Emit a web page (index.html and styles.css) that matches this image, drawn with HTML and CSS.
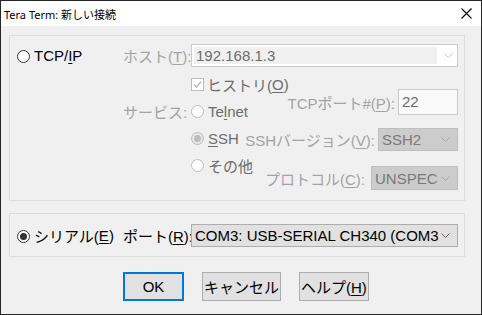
FILE: index.html
```html
<!DOCTYPE html>
<html lang="ja">
<head>
    <meta charset="UTF-8">
    <title>Tera Term: 新しい接続</title>
    <link rel="stylesheet" href="styles.css">
</head>
<body>

<div class="window">
    <div class="titlebar">
        <span class="title">Tera Term: 新しい接続</span>
        <svg class="close" width="11" height="11" viewBox="0 0 11 11">
            <path d="M0.5 0.5 L10.5 10.5 M10.5 0.5 L0.5 10.5" stroke="#000" stroke-width="1.1" fill="none"/>
        </svg>
    </div>

    <div class="content">
        <!-- TCP/IP -->
        <div class="group tcp">
            <div class="host-row">
                <label class="radio-item main"><span class="radio"></span>TCP/<u>I</u>P</label>
                <span class="label dim">ホスト(<u>T</u>):</span>
                <div class="combo host-combo">
                    <span class="edit">192.168.1.3</span>
                    <svg class="chev" width="9" height="5" viewBox="0 0 9 5"><polyline points="0.5,0.5 4.5,4.5 8.5,0.5" fill="none" stroke="#c2c2c2"/></svg>
                </div>
            </div>

            <div class="tcp-lower">
                <div class="svc-grid">
                    <span></span>
                    <label class="check-item off">
                        <span class="check">
                            <svg width="11" height="11" viewBox="0 0 11 11"><polyline points="2,5.5 4.5,8 9,2.5" fill="none" stroke="#b5b5b5" stroke-width="1.3"/></svg>
                        </span>ヒストリ(<u>O</u>)
                    </label>
                    <span class="label dim">サービス:</span>
                    <label class="radio-item off"><span class="radio"></span>Te<u>l</u>net</label>
                    <span></span>
                    <label class="radio-item off"><span class="radio checked"></span><u>S</u>SH</label>
                    <span></span>
                    <label class="radio-item off"><span class="radio"></span>その他</label>
                </div>

                <div class="opts">
                    <div class="opt port-opt">
                        <span class="label dim">TCPポート#(<u>P</u>):</span>
                        <span class="edit-box">22</span>
                    </div>
                    <div class="opt ver-opt">
                        <span class="label dim">SSHバージョン(<u>V</u>):</span>
                        <div class="combo gray ver-combo">
                            <span>SSH2</span>
                            <svg class="chev" width="9" height="5" viewBox="0 0 9 5"><polyline points="0.5,0.5 4.5,4.5 8.5,0.5" fill="none" stroke="#a8a8a8"/></svg>
                        </div>
                    </div>
                    <div class="opt proto-opt">
                        <span class="label dim">プロトコル(<u>C</u>):</span>
                        <div class="combo gray proto-combo">
                            <span>UNSPEC</span>
                            <svg class="chev" width="9" height="5" viewBox="0 0 9 5"><polyline points="0.5,0.5 4.5,4.5 8.5,0.5" fill="none" stroke="#a8a8a8"/></svg>
                        </div>
                    </div>
                </div>
            </div>
        </div>

        <!-- Serial -->
        <div class="group serial">
            <label class="radio-item main"><span class="radio checked"></span>シリアル(<u>E</u>)</label>
            <span class="label">ポート(<u>R</u>):</span>
            <div class="combo port-combo">
                <span>COM3: USB-SERIAL CH340 (COM3</span>
                <svg class="chev" width="9" height="5" viewBox="0 0 9 5"><polyline points="0.5,0.5 4.5,4.5 8.5,0.5" fill="none" stroke="#606060"/></svg>
            </div>
        </div>

        <div class="buttons">
            <button class="btn default">OK</button>
            <button class="btn">キャンセル</button>
            <button class="btn">ヘルプ(<u>H</u>)</button>
        </div>
    </div>
</div>

</body>
</html>
```

FILE: styles.css
```css
body {
    margin: 0;
    background: #f0f0f0;
    font-family: "Liberation Sans", "Noto Sans CJK JP", sans-serif;
    font-size: 15px;
    color: #000;
}

.window {
    width: 482px;
    height: 315px;
    box-sizing: border-box;
    border: 1px solid #262626;
    background: #f0f0f0;
}

.titlebar {
    height: 25px;
    background: #fff;
    display: flex;
    align-items: center;
    padding: 0 9px 0 3px;
}

.title {
    font-family: "Noto Sans", "Noto Sans CJK JP", sans-serif;
    font-size: 11px;
    flex: 1;
}

.close {
    margin-top: -1px;
}

.content {
    padding: 9px 16px 0 8px;
}

u {
    text-decoration: underline;
    text-underline-offset: 2px;
    text-decoration-thickness: 1px;
}

.dim {
    color: #a3a3a3;
}

.off {
    color: #6d6d6d;
}

/* group boxes */
.group {
    border: 1px solid #dcdcdc;
    box-sizing: border-box;
}

.tcp {
    height: 166px;
    padding: 8px 6px 0 7px;
}

.serial {
    height: 44px;
    margin-top: 12px;
    padding: 0 6px 0 7px;
    display: flex;
    align-items: center;
}

/* radio / check */
.radio-item,
.check-item {
    display: flex;
    align-items: center;
    white-space: nowrap;
}

.radio-item.main {
    width: 106px;
    flex: none;
}

.radio-item.main .radio {
    margin-top: 2px;
}

.radio {
    width: 13px;
    height: 13px;
    box-sizing: border-box;
    border: 1px solid #333;
    border-radius: 50%;
    background: #fff;
    margin-right: 4px;
    display: flex;
    align-items: center;
    justify-content: center;
    flex: none;
}

.radio.checked::after {
    content: "";
    width: 7px;
    height: 7px;
    border-radius: 50%;
    background: #333;
}

.off .radio {
    border-color: #bcbcbc;
}

.off .radio.checked {
    background: #e6e6e6;
}

.off .radio.checked::after {
    background: #bcbcbc;
}

.check {
    width: 13px;
    height: 13px;
    box-sizing: border-box;
    border: 1px solid #bcbcbc;
    background: #fff;
    margin-right: 3px;
    display: flex;
    align-items: center;
    justify-content: center;
}

.label {
    width: 68px;
    flex: none;
    white-space: nowrap;
}

/* combos */
.combo {
    height: 23px;
    box-sizing: border-box;
    display: flex;
    align-items: center;
    padding: 0 7px 0 3px;
    white-space: nowrap;
    overflow: hidden;
    flex: none;
}

.combo span {
    flex: 1;
    min-width: 0;
    overflow: hidden;
}

.combo svg {
    flex: none;
}

.host-row {
    display: flex;
    align-items: center;
}

.host-combo {
    flex: 1;
    border: 1px solid #cccccc;
    background: #fff;
    padding: 2px 4px 2px 2px;
}

.host-combo .edit {
    align-self: stretch;
    background: #f0f0f0;
    color: #6d6d6d;
    padding-left: 2px;
    margin-right: 7px;
    line-height: 17px;
}

.gray {
    background: #cccccc;
    border: 1px solid #bfbfbf;
    color: #7a7a7a;
}

.ver-combo {
    width: 80px;
}

.proto-combo {
    width: 87px;
    height: 24px;
}

.port-combo {
    flex: 1;
    background: #e1e1e1;
    border: 1px solid #adadad;
}

/* lower tcp area */
.tcp-lower {
    display: flex;
    margin-left: 106px;
}

.svc-grid {
    flex: 0 0 120px;
    display: grid;
    grid-template-columns: 68px 52px;
    grid-auto-rows: 27px;
    align-items: center;
    margin-top: 4px;
}

.opts {
    flex: 1;
    margin-top: 22px;
    display: flex;
    flex-direction: column;
    align-items: flex-end;
}

.opt {
    display: flex;
    align-items: center;
    gap: 3px;
}

.opt .label {
    width: auto;
}

.port-opt .edit-box {
    width: 60px;
    height: 26px;
    box-sizing: border-box;
    border: 1px solid #cccccc;
    background: #fafafa;
    color: #6d6d6d;
    padding: 0 3px;
    line-height: 24px;
}

.ver-opt {
    margin-top: 13px;
}

.proto-opt {
    margin-top: 15px;
    gap: 6px;
}

/* buttons */
.buttons {
    display: flex;
    gap: 18px;
    margin: 15px 0 0 114px;
}

.btn {
    height: 29px;
    box-sizing: border-box;
    background: #e1e1e1;
    border: 1px solid #adadad;
    font-family: inherit;
    font-size: 15px;
    padding: 0 1px;
    color: #000;
}

.btn.default {
    width: 61px;
    border: 2px solid #0078d7;
}
```
